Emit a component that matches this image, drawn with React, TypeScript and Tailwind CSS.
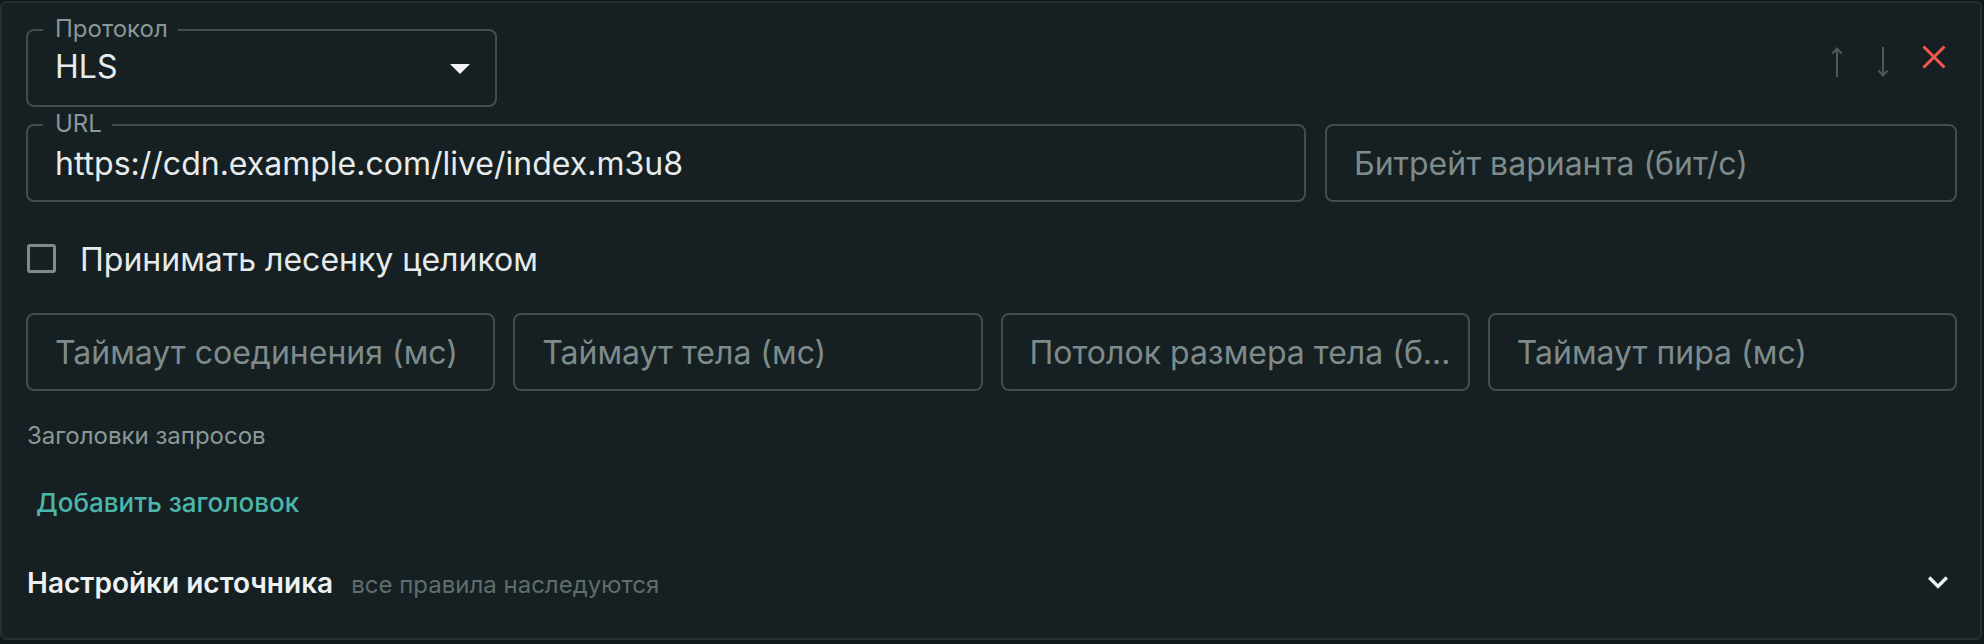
import React from 'react';

type FieldProps = {
  label?: string;
  value?: string;
  placeholder?: string;
  className?: string;
};

// outlined text field with a notched floating label
const Field: React.FC<FieldProps> = ({ label, value, placeholder, className = '' }) => (
  <div className={`relative h-[78px] min-w-0 rounded-[8px] border-2 border-[#414d4e] ${className}`}>
    {label && (
      <span className="absolute left-[15px] top-[-14px] bg-[#162022] pl-[12px] pr-[10px] text-[24px] leading-[24px] text-[#8a9797]">
        {label}
      </span>
    )}
    <div className="flex h-full items-center pl-[27px] pr-[13px] pt-[2px]">
      <span
        className={`block truncate text-[32px] leading-[42px] ${value ? 'text-[#e7ebeb]' : 'text-[#7e8b8b]'}`}
      >
        {value ?? placeholder}
      </span>
    </div>
  </div>
);

const ArrowUp = () => (
  <svg width="12" height="32" viewBox="0 0 12 32" fill="none" className="mt-[1px]">
    <path d="M6 31V2.5M1.5 7.5L6 2.5l4.5 5" stroke="#4b5a5a" strokeWidth="2" />
  </svg>
);

const ArrowDown = () => (
  <svg width="12" height="32" viewBox="0 0 12 32" fill="none" className="mt-[1px]">
    <path d="M6 1v28.5M1.5 24.5L6 29.5l4.5-5" stroke="#4b5a5a" strokeWidth="2" />
  </svg>
);

const CloseX = () => (
  <svg width="24" height="24" viewBox="0 0 24 24" fill="none">
    <path d="M1.5 1.5l21 21M22.5 1.5l-21 21" stroke="#f4574b" strokeWidth="3" />
  </svg>
);

export default function App() {
  return (
    <div className="h-[644px] w-[1984px] bg-[#101819] pt-[1px]" style={{ fontFamily: 'Inter, "Noto Sans", sans-serif' }}>
      <div className="w-[1982px] rounded-[6px] border-2 border-[#223032] bg-[#162022] pb-[36px] pl-[24px] pr-[23px] pt-[26px]">
        {/* protocol + actions */}
        <div className="flex items-start justify-between">
          <div className="relative h-[78px] w-[471px] rounded-[8px] border-2 border-[#414d4e]">
            <span className="absolute left-[15px] top-[-14px] bg-[#162022] pl-[12px] pr-[10px] text-[24px] leading-[24px] text-[#8a9797]">
              Протокол
            </span>
            <div className="flex h-full items-center justify-between pb-[3px] pl-[27px] pr-[25px]">
              <span className="text-[32px] leading-[32px] text-[#e7ebeb]">HLS</span>
              <svg width="20" height="10" viewBox="0 0 20 10" className="mt-[4px]">
                <path d="M0 0h20L10 10z" fill="#f2f4f4" />
              </svg>
            </div>
          </div>
          <div className="mr-[11px] mt-[16px] flex items-start">
            <ArrowUp />
            <div className="ml-[34px]">
              <ArrowDown />
            </div>
            <div className="ml-[33px]">
              <CloseX />
            </div>
          </div>
        </div>

        {/* url + bitrate */}
        <div className="mt-[17px] grid grid-cols-[1280px_1fr] gap-x-[19px]">
          <Field label="URL" value="https://cdn.example.com/live/index.m3u8" />
          <Field placeholder="Битрейт варианта (бит/с)" />
        </div>

        {/* checkbox */}
        <div className="mt-[41px] flex h-[30px] items-center gap-[24px] pl-[1px]">
          <div className="h-[29px] w-[29px] shrink-0 rounded-[3px] border-[3px] border-[#7d8b8b]" />
          <span className="pt-[3px] text-[32px] leading-[32px] text-[#e6eaea]">Принимать лесенку целиком</span>
        </div>

        {/* timeouts */}
        <div className="mt-[40px] grid grid-cols-4 gap-x-[18px]">
          <Field placeholder="Таймаут соединения (мс)" />
          <Field placeholder="Таймаут тела (мс)" />
          <Field placeholder="Потолок размера тела (байт)" />
          <Field placeholder="Таймаут пира (мс)" />
        </div>

        {/* headers */}
        <div className="mt-[33px] pl-[1px] text-[24px] leading-[24px] text-[#8c9898]">Заголовки запросов</div>
        <button className="mt-[42px] block pl-[10px] text-[26px] font-medium leading-[26px] text-[#4db6ac]">
          Добавить заголовок
        </button>

        {/* source settings */}
        <div className="mt-[46px] flex h-[40px] items-center justify-between">
          <div className="flex items-baseline pl-[1px] pt-[2px]">
            <span className="text-[28px] font-semibold leading-[28px] text-[#eef1f1]">Настройки источника</span>
            <span className="ml-[18px] text-[24px] leading-[24px] text-[#5f6d6d]">все правила наследуются</span>
          </div>
          <svg width="40" height="40" viewBox="0 0 24 24" className="mr-[-1px]">
            <path d="M16.59 8.59 12 13.17 7.41 8.59 6 10l6 6 6-6z" fill="#f0f3f3" />
          </svg>
        </div>
      </div>
    </div>
  );
}
